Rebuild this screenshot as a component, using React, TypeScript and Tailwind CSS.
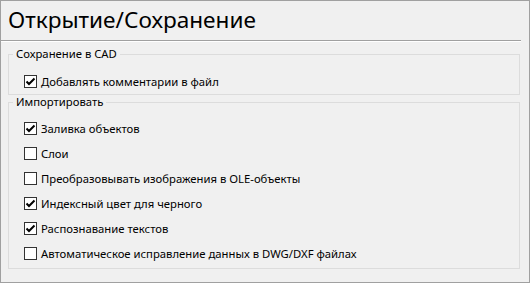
import React from 'react'

const saveOptions = [{ label: 'Добавлять комментарии в файл', checked: true }]

const importOptions = [
  { label: 'Заливка объектов', checked: true },
  { label: 'Слои', checked: false },
  { label: 'Преобразовывать изображения в OLE-объекты', checked: false },
  { label: 'Индексный цвет для черного', checked: true },
  { label: 'Распознавание текстов', checked: true },
  { label: 'Автоматическое исправление данных в DWG/DXF файлах', checked: false },
]

function CheckRow({ label, checked }: { label: string; checked: boolean }) {
  return (
    <div className="flex items-center h-[25px] pl-[15px] gap-[4px]">
      <span className="w-[13px] h-[13px] border border-[#333333] bg-white flex items-center justify-center shrink-0">
        {checked && (
          <svg width="11" height="11" viewBox="0 0 11 11">
            <path d="M1.5 5.5 L4 8 L9.5 2.5" fill="none" stroke="#000" strokeWidth="2" />
          </svg>
        )}
      </span>
      <span className="text-[11.3px] leading-[16px] text-black whitespace-nowrap">{label}</span>
    </div>
  )
}

function Group({ title, children, className }: { title: string; children: React.ReactNode; className: string }) {
  return (
    <fieldset className={`ml-[7px] w-[512px] border border-[#dcdcdc] ${className}`}>
      <legend className="ml-[4px] px-[3px] text-[11.3px] leading-[14px] text-black">{title}</legend>
      {children}
    </fieldset>
  )
}

export default function App() {
  return (
    <div
      className="w-[530px] h-[283px] border border-[#a0a0a0] bg-[#f0f0f0] overflow-hidden"
      style={{ fontFamily: '"Noto Sans", "Open Sans", sans-serif' }}
    >
      <div className="h-[39px] pl-[7px] pt-[3px] text-[22.6px] leading-[32px] text-black">Открытие/Сохранение</div>
      <div className="w-[520px] border-t border-[#a0a0a0] border-b border-b-white" />

      <div className="pt-[5px]">
        <Group title="Сохранение в CAD" className="pt-[8px]">
          {saveOptions.map((o, i) => (
            <CheckRow key={i} label={o.label} checked={o.checked} />
          ))}
        </Group>
        <Group title="Импортировать" className="pt-[7px] pb-[2px]">
          {importOptions.map((o, i) => (
            <CheckRow key={i} label={o.label} checked={o.checked} />
          ))}
        </Group>
      </div>
    </div>
  )
}
